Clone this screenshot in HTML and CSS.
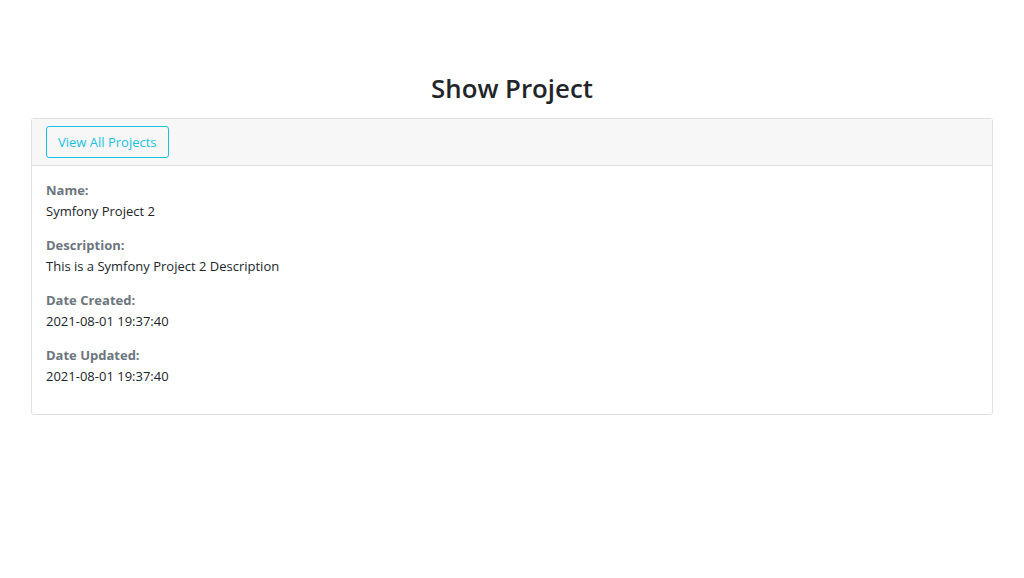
FILE: index.html
```html
<!DOCTYPE html>
<html lang="en">
<head>
<meta charset="utf-8">
<title>Show Project</title>
<link rel="stylesheet" href="styles.css">
</head>
<body>
<div class="container">
  <h2 class="title">Show Project</h2>
  <div class="card">
    <div class="card-header">
      <a class="btn-outline-info" href="#">View All Projects</a>
    </div>
    <div class="card-body">
      <div class="field">
        <div class="label">Name:</div>
        <div class="value">Symfony Project 2</div>
      </div>
      <div class="field">
        <div class="label">Description:</div>
        <div class="value">This is a Symfony Project 2 Description</div>
      </div>
      <div class="field">
        <div class="label">Date Created:</div>
        <div class="value">2021-08-01 19:37:40</div>
      </div>
      <div class="field">
        <div class="label">Date Updated:</div>
        <div class="value">2021-08-01 19:37:40</div>
      </div>
    </div>
  </div>
</div>
</body>
</html>
```

FILE: styles.css
```css
html, body {
  margin: 0;
  padding: 0;
  background: #ffffff;
}
body {
  font-family: "Open Sans", "Noto Sans", "Liberation Sans", sans-serif;
  font-size: 13px;
  line-height: 1.5;
  color: #212529;
}
.container {
  width: 962px;
  margin: 0 auto;
  padding-top: 71px;
}
.title {
  margin: 0 0 12px 0;
  text-align: center;
  font-size: 25.8px;
  font-weight: 600;
  line-height: 35px;
  color: #212529;
}
.card {
  border: 1px solid #dfdfdf;
  border-radius: 3px;
  background: #fff;
}
.card-header {
  background: #f7f7f7;
  border-bottom: 1px solid #dfdfdf;
  padding: 7px 14px 7px 14px;
}
.btn-outline-info {
  display: inline-block;
  box-sizing: border-box;
  height: 32px;
  line-height: 30px;
  padding: 0 11px;
  border: 1px solid #17c2e0;
  border-radius: 3px;
  color: #17c2e0;
  text-decoration: none;
  font-size: 13px;
}
.card-body {
  padding: 14px 14px 14px 14px;
}
.field {
  margin-bottom: 14px;
}
.label {
  font-weight: 700;
  color: #6c757d;
  line-height: 20px;
}
.value {
  line-height: 20px;
  margin-top: 1px;
}
```
